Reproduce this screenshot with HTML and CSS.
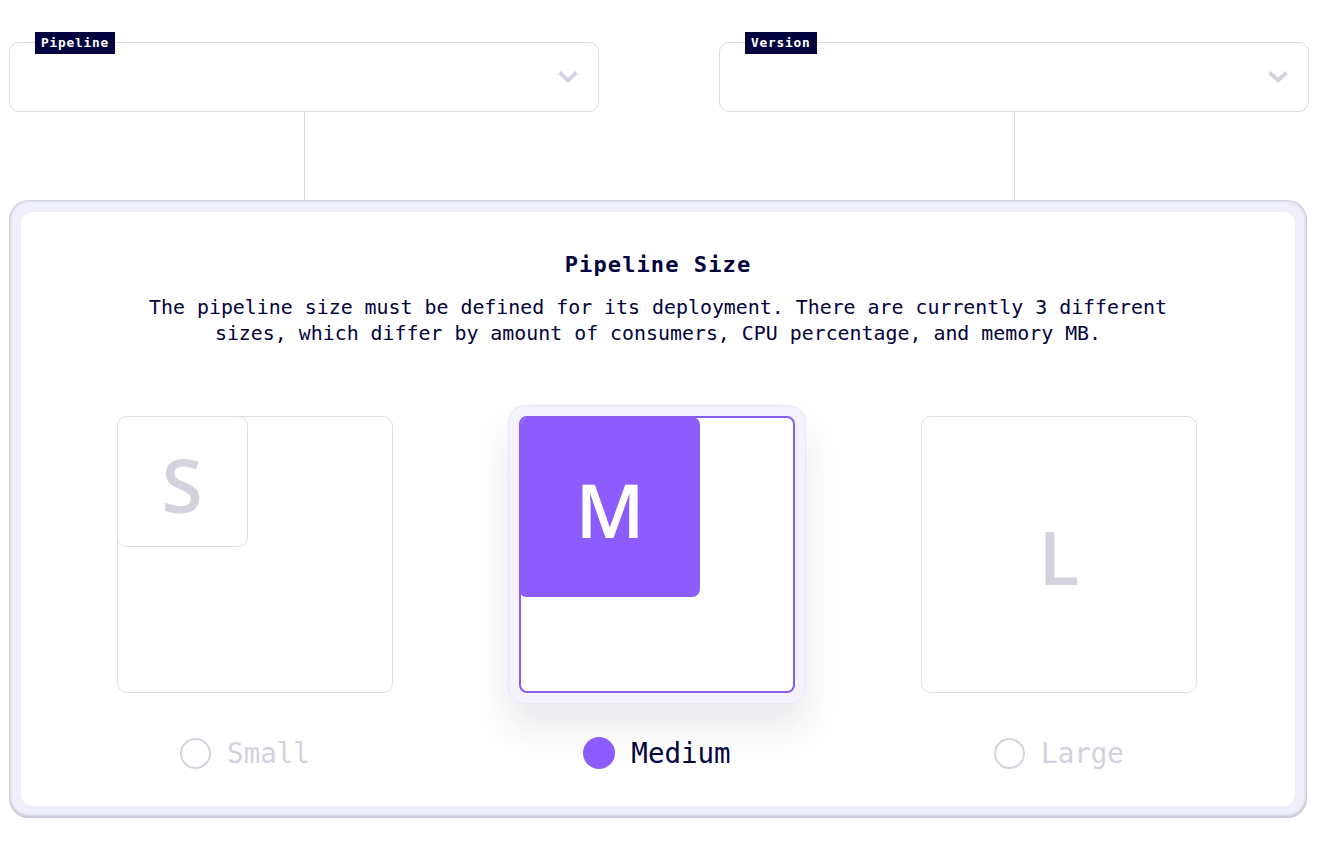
FILE: index.html
```html
<!DOCTYPE html>
<html lang="en">
<head>
<meta charset="utf-8">
<title>Pipeline Size</title>
<link rel="stylesheet" href="styles.css">
</head>
<body>
<div class="page">
  <div class="fields">
    <div class="field-col">
      <div class="select">
        <span class="select-label">Pipeline</span>
        <svg class="chev" width="22" height="14" viewBox="0 0 22 14"><polyline points="2.5,2.5 11,10.5 19.5,2.5" fill="none" stroke="#d3d3df" stroke-width="3.8" stroke-linejoin="miter"/></svg>
      </div>
      <div class="connector"></div>
    </div>
    <div class="field-col">
      <div class="select">
        <span class="select-label">Version</span>
        <svg class="chev" width="22" height="14" viewBox="0 0 22 14"><polyline points="2.5,2.5 11,10.5 19.5,2.5" fill="none" stroke="#d3d3df" stroke-width="3.8" stroke-linejoin="miter"/></svg>
      </div>
      <div class="connector"></div>
    </div>
  </div>

  <section class="panel">
    <div class="panel-inner">
      <h2 class="title">Pipeline Size</h2>
      <p class="desc">The pipeline size must be defined for its deployment. There are currently 3 different sizes, which differ by amount of consumers, CPU percentage, and memory MB.</p>
      <div class="sizes">
        <div class="size-col">
          <div class="card-wrap">
            <div class="card">
              <div class="tile tile-s">S</div>
            </div>
          </div>
          <div class="radio radio-small"><span class="dot"></span><span class="radio-text">Small</span></div>
        </div>
        <div class="size-col">
          <div class="card-wrap is-active">
            <div class="card">
              <div class="tile tile-m">M</div>
            </div>
          </div>
          <div class="radio is-active"><span class="dot"></span><span class="radio-text">Medium</span></div>
        </div>
        <div class="size-col">
          <div class="card-wrap">
            <div class="card">
              <div class="tile tile-l">L</div>
            </div>
          </div>
          <div class="radio"><span class="dot"></span><span class="radio-text">Large</span></div>
        </div>
      </div>
    </div>
  </section>
</div>
</body>
</html>
```

FILE: styles.css
```css
* { box-sizing: border-box; }

html, body {
  margin: 0;
  padding: 0;
  background: #ffffff;
}

body {
  font-family: "DejaVu Sans Mono", "Liberation Mono", monospace;
  color: #03033d;
}

.page {
  padding: 42px 9px 0 9px;
  width: 1318px;
}

.fields {
  display: flex;
  gap: 120px;
}

.field-col {
  width: 590px;
  display: flex;
  flex-direction: column;
  align-items: center;
}

.select {
  position: relative;
  width: 100%;
  height: 70px;
  border: 1.5px solid #dcdce6;
  border-radius: 10px;
  display: flex;
  align-items: center;
  justify-content: flex-end;
  padding-right: 19px;
}

.select-label {
  position: absolute;
  top: -11px;
  left: 25px;
  height: 22px;
  line-height: 22px;
  padding: 0 6px;
  background: #03033d;
  color: #ffffff;
  font-size: 12.8px;
  font-weight: bold;
  letter-spacing: 0.8px;
}

.chev {
  display: block;
  margin-top: -1px;
}

.connector {
  width: 1px;
  height: 88px;
  background: #d6d6e0;
}

.panel {
  width: 1298px;
  background: #efeffb;
  border-radius: 20px;
  padding: 12px;
  box-shadow: inset 0 -2px 3px #c4c4d2, inset 0 0 3px 1px #c8c8d6;
}

.panel-inner {
  background: #ffffff;
  border-radius: 12px;
  padding: 39px 0 37px;
  display: flex;
  flex-direction: column;
  align-items: center;
}

.title {
  margin: 0;
  font-size: 22px;
  line-height: 28px;
  font-weight: bold;
  letter-spacing: 1.1px;
}

.desc {
  margin: 16px 0 0;
  max-width: 1060px;
  text-align: center;
  font-size: 19.9px;
  line-height: 26px;
}

.sizes {
  margin-top: 58px;
  display: flex;
  gap: 104px;
  margin-right: 2px;
}

.size-col {
  display: flex;
  flex-direction: column;
  align-items: center;
  gap: 33px;
}

.card-wrap {
  width: 298px;
  height: 299px;
  padding: 11px;
  border-radius: 17px;
}

.card-wrap.is-active {
  background: #f3f2fd;
  border: 1px solid #e8e8f2;
  padding: 10px;
  box-shadow: 0 24px 36px rgba(40, 40, 70, 0.10);
}

.card {
  width: 276px;
  height: 277px;
  border: 1.5px solid #dedee8;
  border-radius: 10px;
  background: #ffffff;
  position: relative;
  overflow: hidden;
}

.is-active .card {
  border: 2px solid #8a5cf0;
  border-radius: 8px;
}

.tile {
  display: flex;
  align-items: center;
  justify-content: center;
  font-family: "Open Sans", "Noto Sans", sans-serif;
  font-weight: 600;
  font-size: 75px;
  color: #d3d3df;
}

.tile-s {
  width: 131px;
  height: 131px;
  margin: -1.5px 0 0 -1.5px;
  border: 1.5px solid #dedee8;
  border-radius: 10px;
  padding-top: 6px;
}

.tile-m {
  width: 180px;
  height: 180px;
  margin: -1px 0 0 -1px;
  background: #8c5cff;
  color: #ffffff;
  border-radius: 6px 8px 8px 6px;
  padding-top: 4px;
}

.tile-l {
  width: 100%;
  height: 100%;
  padding-top: 2px;
}

.radio {
  display: flex;
  align-items: center;
  gap: 16px;
  height: 32px;
  font-size: 27.5px;
  color: #d2d2dd;
}

.radio-small {
  margin-right: 20px;
}

.radio .dot {
  width: 31px;
  height: 31px;
  border-radius: 50%;
  border: 2px solid #d4d4de;
}

.radio.is-active {
  color: #03033d;
}

.radio.is-active .dot {
  width: 32px;
  height: 32px;
  border: none;
  background: #8c5cff;
}
```
